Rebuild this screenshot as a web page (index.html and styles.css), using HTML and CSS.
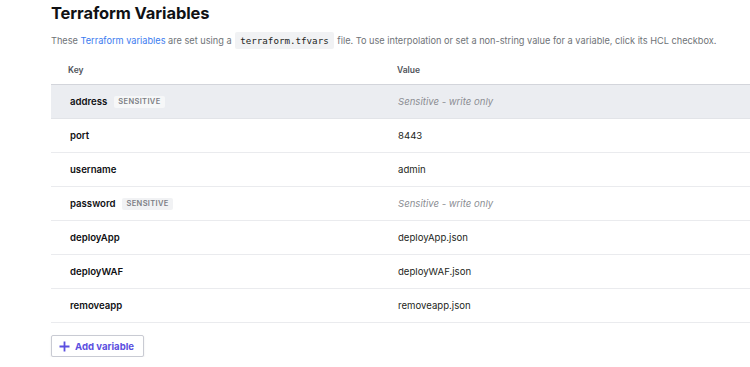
FILE: index.html
```html
<!DOCTYPE html>
<html>
<head>
<meta charset="utf-8">
<link rel="stylesheet" href="styles.css">
</head>
<body>
<div class="page">
  <h1 class="title">Terraform Variables</h1>
  <p class="desc">These <a class="link">Terraform variables</a> are set using a <code class="code">terraform.tfvars</code> file. To use interpolation or set a non-string value for a variable, click its HCL checkbox.</p>
  <div class="table">
    <div class="row head">
      <div class="kcell">Key</div>
      <div class="vcell">Value</div>
    </div>
    <div class="row sel">
      <div class="kcell"><span class="key">address</span><span class="badge">SENSITIVE</span></div>
      <div class="vcell"><span class="secret">Sensitive - write only</span></div>
    </div>
    <div class="row">
      <div class="kcell"><span class="key">port</span></div>
      <div class="vcell">8443</div>
    </div>
    <div class="row">
      <div class="kcell"><span class="key">username</span></div>
      <div class="vcell">admin</div>
    </div>
    <div class="row">
      <div class="kcell"><span class="key">password</span><span class="badge">SENSITIVE</span></div>
      <div class="vcell"><span class="secret">Sensitive - write only</span></div>
    </div>
    <div class="row">
      <div class="kcell"><span class="key">deployApp</span></div>
      <div class="vcell">deployApp.json</div>
    </div>
    <div class="row">
      <div class="kcell"><span class="key">deployWAF</span></div>
      <div class="vcell">deployWAF.json</div>
    </div>
    <div class="row">
      <div class="kcell"><span class="key">removeapp</span></div>
      <div class="vcell">removeapp.json</div>
    </div>
  </div>
  <button class="btn"><svg width="11" height="11" viewBox="0 0 11 11"><path d="M5.5 0.5v10M0.5 5.5h10" stroke="#5b4fe0" stroke-width="1.8" fill="none"/></svg>Add variable</button>
</div>
</body>
</html>
```
FILE: styles.css
```css
* { box-sizing: border-box; }
html, body { margin: 0; padding: 0; background: #fff; }
body { font-family: Inter, "Noto Sans", sans-serif; color: #1f2124; }
.page { padding: 3px 0 0 51px; }
.title { margin: 0; font-size: 16.5px; font-weight: 700; line-height: 20px; letter-spacing: -0.1px; color: #101114; }
.desc { margin: 9px 0 0; font-size: 9.2px; line-height: 18px; color: #6f7377; white-space: nowrap; }
.link { color: #3b7cf0; }
.code { font-family: "DejaVu Sans Mono", monospace; font-size: 9.2px; background: #f1f2f4; color: #1d1f22; padding: 3px 5px; border-radius: 2px; margin: 0 1px; }
.table { margin-top: 12px; }
.row { display: flex; height: 34px; align-items: center; border-bottom: 1px solid #eaebee; font-size: 9.6px; }
.row.head { height: 23px; align-items: flex-start; padding-top: 2px; line-height: 12px; border-bottom: 1px solid #d3d5db; font-size: 8.5px; font-weight: 600; color: #50535a; }
.row.head .kcell { padding-left: 17px; }
.row.head .vcell { color: #50535a; margin-left: -1px; }
.row.sel { background: #ebedf1; border-bottom-color: #e2e4e8; }
.kcell { width: 347px; padding-left: 19px; display: flex; align-items: center; }
.vcell { flex: 1; color: #1d1f22; }
.key { font-weight: 600; color: #0f1013; }
.badge { margin-left: 7px; background: #f1f2f4; color: #7b7e84; font-size: 7.5px; font-weight: 600; letter-spacing: 0.35px; line-height: 10px; padding: 1px 4px; border-radius: 2px; }
.sel .badge { background: #f6f7f8; }
.secret { font-style: italic; color: #8b8e93; }
.btn { margin-top: 12px; display: flex; align-items: center; gap: 5px; height: 22px; width: 93px; padding: 0 0 0 7px; background: #fff; border: 1px solid #c9cbd3; border-radius: 2px; box-shadow: 0 1px 2px rgba(0,0,0,0.1); font-family: Inter, sans-serif; font-size: 9.6px; font-weight: 700; color: #5b4fe0; }
```
